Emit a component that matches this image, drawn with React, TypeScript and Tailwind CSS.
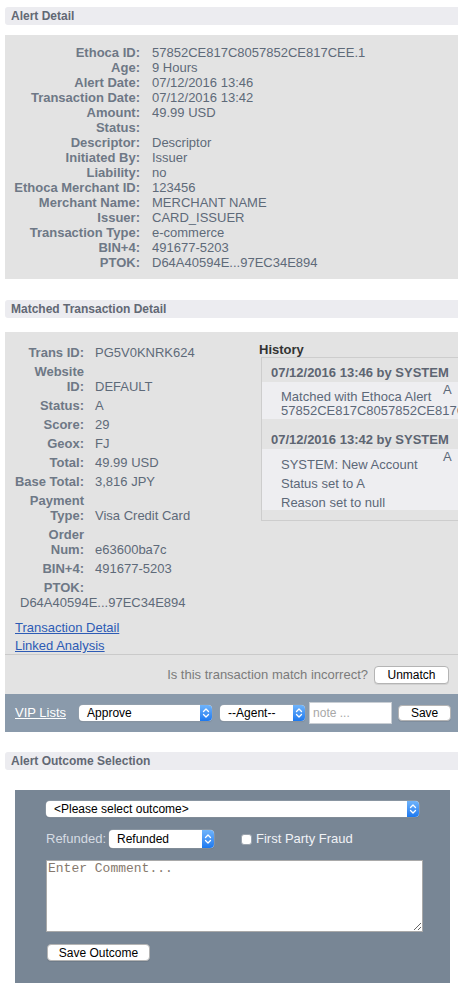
import React from 'react';

const alertRows: [string, string][] = [
  ['Ethoca ID:', '57852CE817C8057852CE817CEE.1'],
  ['Age:', '9 Hours'],
  ['Alert Date:', '07/12/2016 13:46'],
  ['Transaction Date:', '07/12/2016 13:42'],
  ['Amount:', '49.99 USD'],
  ['Status:', ''],
  ['Descriptor:', 'Descriptor'],
  ['Initiated By:', 'Issuer'],
  ['Liability:', 'no'],
  ['Ethoca Merchant ID:', '123456'],
  ['Merchant Name:', 'MERCHANT NAME'],
  ['Issuer:', 'CARD_ISSUER'],
  ['Transaction Type:', 'e-commerce'],
  ['BIN+4:', '491677-5203'],
  ['PTOK:', 'D64A40594E...97EC34E894'],
];

const txRows: [string[], string][] = [
  [['Trans ID:'], 'PG5V0KNRK624'],
  [['Website', 'ID:'], 'DEFAULT'],
  [['Status:'], 'A'],
  [['Score:'], '29'],
  [['Geox:'], 'FJ'],
  [['Total:'], '49.99 USD'],
  [['Base Total:'], '3,816 JPY'],
  [['Payment', 'Type:'], 'Visa Credit Card'],
  [['Order', 'Num:'], 'e63600ba7c'],
  [['BIN+4:'], '491677-5203'],
];

function SectionHeader({ title }: { title: string }) {
  return (
    <div className="ml-[5px] h-[18px] rounded-l-[3px] bg-[#ececf0] pl-[6px] text-[12px] font-bold leading-[18px] text-[#626874]">
      {title}
    </div>
  );
}

function Arrows() {
  return (
    <svg width="12" height="16" viewBox="0 0 12 16" fill="none">
      <path d="M3.5 6.5 L6 4 L8.5 6.5" stroke="white" strokeWidth="1.3" strokeLinecap="round" strokeLinejoin="round" />
      <path d="M3.5 9.5 L6 12 L8.5 9.5" stroke="white" strokeWidth="1.3" strokeLinecap="round" strokeLinejoin="round" />
    </svg>
  );
}

function Select({ label, className }: { label: string; className: string }) {
  return (
    <div className={`flex shrink-0 items-stretch overflow-hidden rounded-[4px] bg-white text-[12px] text-black shadow-[0_0_0_0.5px_#9aa3ad,0_1px_1px_rgba(0,0,0,0.15)] ${className}`}>
      <span className="flex flex-1 items-center pl-[8px] whitespace-nowrap">{label}</span>
      <span className="flex w-[12px] items-center justify-center bg-gradient-to-b from-[#6fb4fb] to-[#1a78ef]">
        <Arrows />
      </span>
    </div>
  );
}

function Button({ label, className }: { label: string; className: string }) {
  return (
    <button className={`flex shrink-0 items-center justify-center rounded-[4px] border border-[#b4b4b4] bg-white text-[12px] text-black shadow-[0_1px_0_rgba(0,0,0,0.08)] ${className}`}>
      {label}
    </button>
  );
}

function HistoryEntry({ head, lines, wrap, first }: { head: string; lines: string[]; wrap?: boolean; first?: boolean }) {
  return (
    <div className={first ? '' : 'mt-[6px]'}>
      <div className="pt-[7px] pb-[2px] pl-[9px] text-[13px] font-bold leading-[15px] whitespace-nowrap text-[#5d6572]">{head}</div>
      <div className="relative bg-[#eeeef1] pt-[8px] pl-[19px] text-[13px] text-[#5c6878]">
        <span className="absolute top-0 left-[181px] leading-[15px]">A</span>
        {wrap ? (
          <div className="pb-[1px] leading-[14px]">
            <div>{lines[0]}</div>
            <div className="whitespace-nowrap">{lines[1]}</div>
          </div>
        ) : (
          <div className="flex flex-col gap-[4px] leading-[15px]">
            {lines.map((l) => (
              <div key={l}>{l}</div>
            ))}
          </div>
        )}
      </div>
    </div>
  );
}

export default function App() {
  return (
    <div className="w-[458px] overflow-hidden bg-white pt-[7px] pb-[8px] font-['Liberation_Sans',Arial,sans-serif]">
      <SectionHeader title="Alert Detail" />

      <div className="mt-[10px] ml-[5px] bg-[#e3e3e3] pt-[10px] pb-[9px] text-[13px] leading-[15px]">
        {alertRows.map(([k, v]) => (
          <div key={k} className="flex">
            <span className="w-[135px] shrink-0 text-right font-bold whitespace-nowrap text-[#6e7886]">{k}</span>
            <span className="ml-[12px] whitespace-nowrap text-[#5e6a79]">{v}</span>
          </div>
        ))}
      </div>

      <div className="mt-[21px]">
        <SectionHeader title="Matched Transaction Detail" />
      </div>

      <div className="mt-[14px] ml-[5px] bg-[#e3e3e3]">
        <div className="flex">
          <div className="w-[254px] shrink-0 pt-[13px] pb-[1px] text-[13px] leading-[15px]">
            {txRows.map(([k, v]) => (
              <div key={k.join(' ')} className="mb-[4px] flex items-end">
                <span className="w-[79px] shrink-0 text-right font-bold whitespace-nowrap text-[#6e7886]">
                  {k.map((p, i) => (
                    <div key={i}>{p}</div>
                  ))}
                </span>
                <span className="ml-[11px] whitespace-nowrap text-[#5e6a79]">{v}</span>
              </div>
            ))}
            <div className="w-[79px] text-right font-bold text-[#6e7886]">PTOK:</div>
            <div className="pl-[15px] text-[#5e6a79]">D64A40594E...97EC34E894</div>
            <div className="mt-[10px] pl-[10px]">
              <a className="text-[#2d5bb5] underline">Transaction Detail</a>
            </div>
            <div className="mt-[3px] pl-[10px]">
              <a className="text-[#2d5bb5] underline">Linked Analysis</a>
            </div>
          </div>

          <div className="pt-[10px]">
            <div className="text-[13px] font-bold leading-[15px] text-[#333]">History</div>
            <div className="ml-[2px] w-[230px] border border-[#cdcdcd] pb-[10px]">
              <HistoryEntry
                first
                wrap
                head="07/12/2016 13:46 by SYSTEM"
                lines={['Matched with Ethoca Alert', '57852CE817C8057852CE817CEE.1']}
              />
              <HistoryEntry
                head="07/12/2016 13:42 by SYSTEM"
                lines={['SYSTEM: New Account', 'Status set to A', 'Reason set to null']}
              />
            </div>
          </div>
        </div>

        <div className="flex h-[40px] items-center justify-end border-t border-[#cacaca] pr-[9px]">
          <span className="text-[13px] text-[#7b7b7b]">Is this transaction match incorrect?</span>
          <Button label="Unmatch" className="ml-[6px] h-[18px] w-[75px]" />
        </div>

        <div className="flex h-[38px] items-center bg-[#8a9aab] pl-[10px]">
          <a className="text-[13px] text-white underline">VIP Lists</a>
          <Select label="Approve" className="ml-[13px] h-[16px] w-[133px]" />
          <Select label="--Agent--" className="ml-[8px] h-[16px] w-[85px]" />
          <input
            placeholder="note ..."
            className="ml-[4px] h-[22px] w-[83px] shrink-0 border border-[#c9ced4] bg-white pl-[3px] text-[12px] text-black outline-none placeholder:text-[#a8a8a8]"
          />
          <Button label="Save" className="ml-[6px] h-[16px] w-[53px]" />
        </div>
      </div>

      <div className="mt-[20px]">
        <SectionHeader title="Alert Outcome Selection" />
      </div>

      <div className="mt-[20px] ml-[15px] w-[435px] bg-[#788695] pt-[11px] pb-[22px] pl-[31px]">
        <Select label="<Please select outcome>" className="h-[16px] w-[373px]" />
        <div className="mt-[13px] flex h-[18px] items-center">
          <span className="text-[13px] text-[#d6dce3]">Refunded:</span>
          <Select label="Refunded" className="ml-[3px] h-[18px] w-[105px]" />
          <span className="ml-[27px] h-[11px] w-[11px] rounded-[3px] border border-[#9aa3ad] bg-white" />
          <span className="ml-[4px] text-[13px] text-[#f0f2f5]">First Party Fraud</span>
        </div>
        <textarea
          placeholder="Enter Comment..."
          className="mt-[12px] block h-[72px] w-[377px] border border-[#a9a9a9] bg-white px-[1px] py-[1px] font-['Liberation_Mono',monospace] text-[13px] leading-[14px] outline-none placeholder:text-[#86796d]"
        />
        <Button label="Save Outcome" className="mt-[12px] ml-[1px] h-[17px] w-[103px]" />
      </div>
    </div>
  );
}
